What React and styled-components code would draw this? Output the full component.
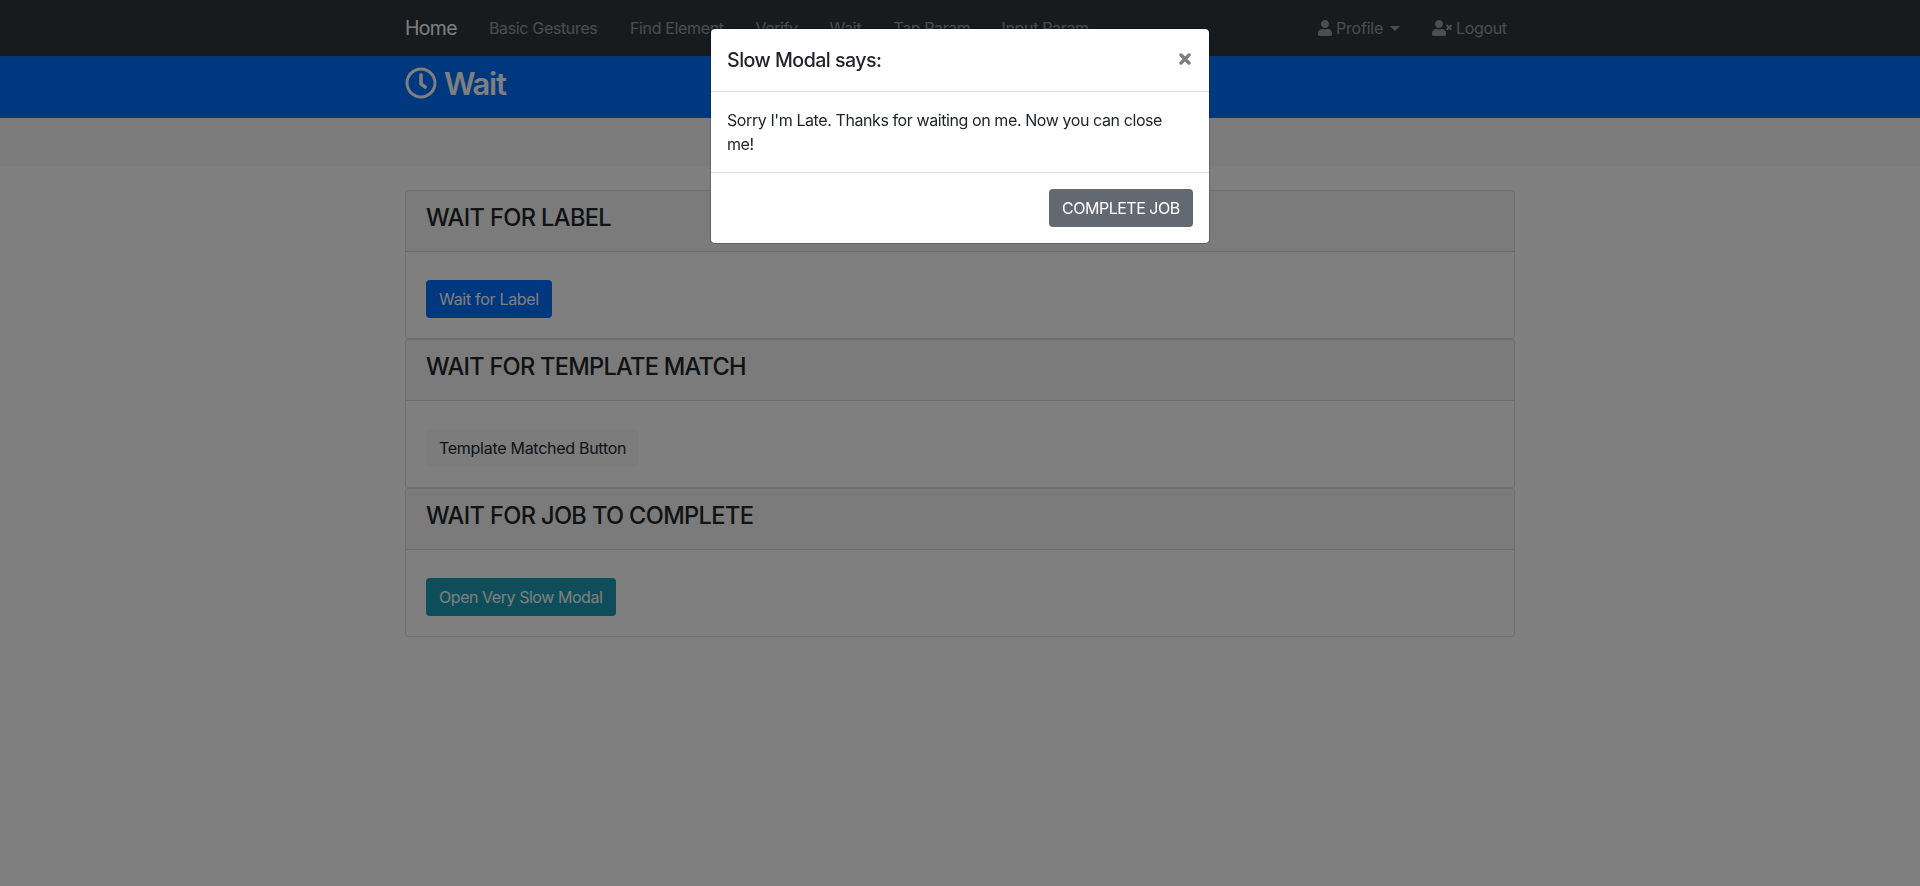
import React from "react";
import styled, { createGlobalStyle } from "styled-components";
import { FaUser, FaUserTimes, FaRegClock } from "react-icons/fa";

const GlobalStyle = createGlobalStyle`
  *, *::before, *::after { box-sizing: border-box; }
  body {
    margin: 0;
    background: #fff;
    color: #212529;
    font-family: Inter, "Liberation Sans", sans-serif;
    font-size: 16px;
    line-height: 24px;
    overflow: hidden;
  }
  h1, h4, h5, p { margin: 0; }
`;

const Container = styled.div`
  width: 1140px;
  margin: 0 auto;
  padding: 0 15px;
`;

const Navbar = styled.nav`
  height: 56px;
  background: #2f363a;
`;

const NavRow = styled(Container)`
  display: flex;
  align-items: center;
  height: 56px;
`;

const Track = styled.span`
  letter-spacing: ${(p) => p.$t || 0}px;
  white-space: nowrap;
`;

const Brand = styled.a`
  width: 52px;
  margin-right: 32px;
  color: #fff;
  font-size: 19.4px;
  line-height: 30px;
`;

const NavLink = styled.a`
  display: flex;
  align-items: center;
  width: ${(p) => p.$w}px;
  margin-right: 32px;
  color: rgba(255, 255, 255, 0.5);
  white-space: nowrap;
  svg { display: block; flex: none; margin-right: 4px; }
`;

const UserIcon = styled(FaUser)`
  width: 14px;
  height: 16px;
`;

const NavEnd = styled.div`
  display: flex;
  margin-left: auto;
  margin-right: -24px;
`;

const Caret = styled.span`
  margin-left: auto;
  border-top: 5px solid;
  border-left: 5px solid transparent;
  border-right: 5px solid transparent;
`;

const PageHeader = styled.header`
  height: 62px;
  padding-top: 8px;
  background: #0070ff;
  color: #fff;
`;

const PageTitle = styled.h1`
  display: flex;
  align-items: center;
  height: 38px;
  font-size: 31px;
  font-weight: 600;
  line-height: 38px;
  svg { margin-right: 7px; }
  span { padding-top: 1px; }
`;

const Strip = styled.section`
  height: 48px;
  margin-bottom: 24px;
  background: #f8f9fa;
`;

const Card = styled.article`
  border: 1px solid rgba(0, 0, 0, 0.125);
  border-radius: 4px;
  background: #fff;
`;

const CardHeader = styled.div`
  height: 61px;
  padding: 12px 20px;
  border-bottom: 1px solid rgba(0, 0, 0, 0.125);
  background: rgba(0, 0, 0, 0.03);
`;

const CardTitle = styled.h4`
  font-size: 23.6px;
  font-weight: 500;
  line-height: 29px;
`;

const CardBody = styled.div`
  padding: 28px 20px 20px;
`;

const tones = {
  primary: ["#0070ff", "#fff"],
  light: ["#f8f9fa", "#212529"],
  info: ["#1a9cb4", "#fff"],
  secondary: ["#626971", "#fff"],
};

const Button = styled.button`
  display: block;
  width: ${(p) => p.$w}px;
  height: 38px;
  padding: 0 0 0 13px;
  border: 0;
  border-radius: 4px;
  background: ${(p) => tones[p.$tone][0]};
  color: ${(p) => tones[p.$tone][1]};
  font: inherit;
  text-align: left;
`;

const Backdrop = styled.div`
  position: fixed;
  inset: 0;
  background: rgba(0, 0, 0, 0.5);
`;

const Dialog = styled.div`
  width: 500px;
  margin: 28px auto;
  border: 1px solid rgba(0, 0, 0, 0.2);
  border-radius: 5px;
  background: #fff;
  background-clip: padding-box;
`;

const DialogHeader = styled.div`
  display: flex;
  justify-content: space-between;
  height: 63px;
  padding: 16px;
  border-bottom: 1px solid #dee2e6;
`;

const DialogTitle = styled.h5`
  font-size: 19.6px;
  font-weight: 500;
  line-height: 30px;
`;

const Close = styled.button`
  display: flex;
  align-items: center;
  justify-content: center;
  width: 16px;
  height: 28px;
  padding: 0;
  border: 0;
  background: none;
  color: #000;
  opacity: 0.5;
`;

const DialogBody = styled.p`
  padding: 16px;
`;

const DialogFooter = styled.div`
  display: flex;
  justify-content: flex-end;
  padding: 16px;
  border-top: 1px solid #dee2e6;
`;

const links = [
  ["Basic Gestures", 109, -0.35],
  ["Find Element", 93.5, -0.35],
  ["Verify", 42, -0.45],
  ["Wait", 32, -0.3],
  ["Tap Param", 76, -0.41],
  ["Input Param", 88, -0.34],
];

const cards = [
  { title: "WAIT FOR LABEL", titleTrack: -0.62, action: "Wait for Label", track: -0.3, tone: "primary", width: 126 },
  { title: "WAIT FOR TEMPLATE MATCH", titleTrack: -0.73, action: "Template Matched Button", track: -0.28, tone: "light", width: 213 },
  { title: "WAIT FOR JOB TO COMPLETE", titleTrack: -0.63, action: "Open Very Slow Modal", track: -0.45, tone: "info", width: 190 },
];

export default function App() {
  return (
    <>
      <GlobalStyle />
      <Navbar>
        <NavRow>
          <Brand><Track $t={-0.6}>Home</Track></Brand>
          {links.map(([label, width, track]) => (
            <NavLink key={label} $w={width}><Track $t={track}>{label}</Track></NavLink>
          ))}
          <NavEnd>
            <NavLink $w={82}><UserIcon /><Track $t={-0.2}>Profile</Track><Caret /></NavLink>
            <NavLink $w={75}><FaUserTimes size={20} /><Track $t={-0.33}>Logout</Track></NavLink>
          </NavEnd>
        </NavRow>
      </Navbar>
      <PageHeader>
        <Container>
          <PageTitle><FaRegClock size={32} /><Track $t={-1.3}>Wait</Track></PageTitle>
        </Container>
      </PageHeader>
      <Strip />
      <Container>
        {cards.map((c) => (
          <Card key={c.title}>
            <CardHeader><CardTitle><Track $t={c.titleTrack}>{c.title}</Track></CardTitle></CardHeader>
            <CardBody><Button $tone={c.tone} $w={c.width}><Track $t={c.track}>{c.action}</Track></Button></CardBody>
          </Card>
        ))}
      </Container>
      <Backdrop>
        <Dialog>
          <DialogHeader>
            <DialogTitle><Track $t={-0.52}>Slow Modal says:</Track></DialogTitle>
            <Close aria-label="Close">
              <svg width="12" height="12" viewBox="0 0 12 12" fill="none" stroke="currentColor" strokeWidth="3.4" strokeLinecap="round">
                <path d="M2 2 10 10M10 2 2 10" />
              </svg>
            </Close>
          </DialogHeader>
          <DialogBody>
            <Track $t={-0.41}>Sorry I'm Late. Thanks for waiting on me. Now you can close<br />me!</Track>
          </DialogBody>
          <DialogFooter><Button $tone="secondary" $w={144}><Track $t={-0.49}>COMPLETE JOB</Track></Button></DialogFooter>
        </Dialog>
      </Backdrop>
    </>
  );
}
